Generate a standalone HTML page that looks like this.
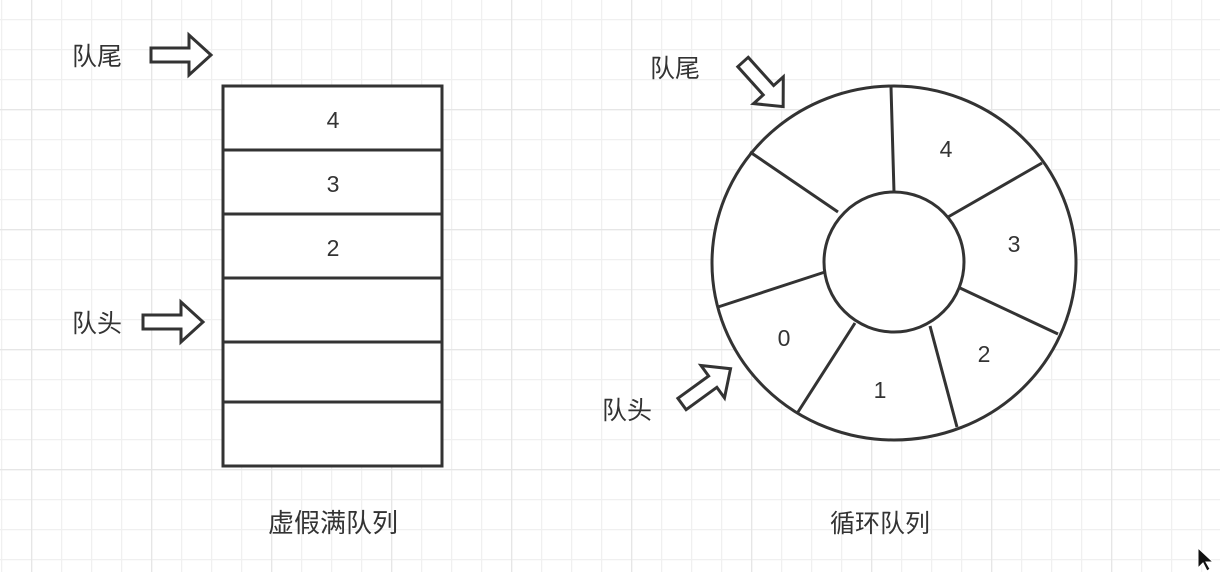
<!DOCTYPE html>
<html><head><meta charset="utf-8"><style>
html,body{margin:0;padding:0;background:#fff;}
body{width:1220px;height:572px;overflow:hidden;}
</style></head><body>
<svg width="1220" height="572" viewBox="0 0 1220 572" xmlns="http://www.w3.org/2000/svg">
<defs>
<pattern id="g" x="1" y="19" width="30" height="30" patternUnits="userSpaceOnUse">
<path d="M0.5 0V30M0 0.5H30" stroke="#f0f0f0" stroke-width="1.5" fill="none"/>
</pattern>
<pattern id="G" x="31" y="109" width="120" height="120" patternUnits="userSpaceOnUse">
<path d="M0.5 0V120M0 0.5H120" stroke="#e6e6e6" stroke-width="1.5" fill="none"/>
</pattern>
<polygon id="arr" points="0,-7 38,-7 38,-20 60,0 38,20 38,7 0,7"/>
</defs>
<rect width="1220" height="572" fill="url(#g)"/>
<rect width="1220" height="572" fill="url(#G)"/>
<g fill="#fff" stroke="#333" stroke-width="3" stroke-linejoin="miter">
<use href="#arr" transform="translate(151,55)"/>
<use href="#arr" transform="translate(143,322)"/>
<use href="#arr" transform="translate(743,62) rotate(48)"/>
<use href="#arr" transform="translate(682,404) rotate(-36)"/>
<rect x="223" y="86" width="219" height="380"/>
<path d="M223 150H442M223 214H442M223 278H442M223 342H442M223 402H442" fill="none"/>
<ellipse cx="894" cy="263" rx="182" ry="177"/>
<circle cx="894" cy="262" r="70"/>
<path d="M891 87L894 192M750 152L838 212M718 307L825 272M798 412L855 323M957 427L930 326M1058 334L960 288M1042 163L948 217" fill="none"/>
</g>
<g font-family="Liberation Sans, Noto Sans CJK SC, sans-serif" font-size="25" fill="#333">
<text x="72" y="65">队尾</text>
<text x="72" y="332">队头</text>
<text x="650" y="77">队尾</text>
<text x="602" y="419">队头</text>
<text x="268" y="532" font-size="26">虚假满队列</text>
<text x="830" y="532">循环队列</text>
</g>
<g font-family="Liberation Sans, sans-serif" font-size="23" fill="#333" text-anchor="middle">
<text x="333" y="128">4</text>
<text x="333" y="192">3</text>
<text x="333" y="256">2</text>
<text x="946" y="157">4</text>
<text x="1014" y="252">3</text>
<text x="984" y="362">2</text>
<text x="880" y="398">1</text>
<text x="784" y="346">0</text>
</g>
<path d="M1198 548V568L1203 563L1207 571L1210 569L1206 562L1213 562Z" fill="#111" stroke="#fff" stroke-width="1"/>
</svg>
</body></html>
